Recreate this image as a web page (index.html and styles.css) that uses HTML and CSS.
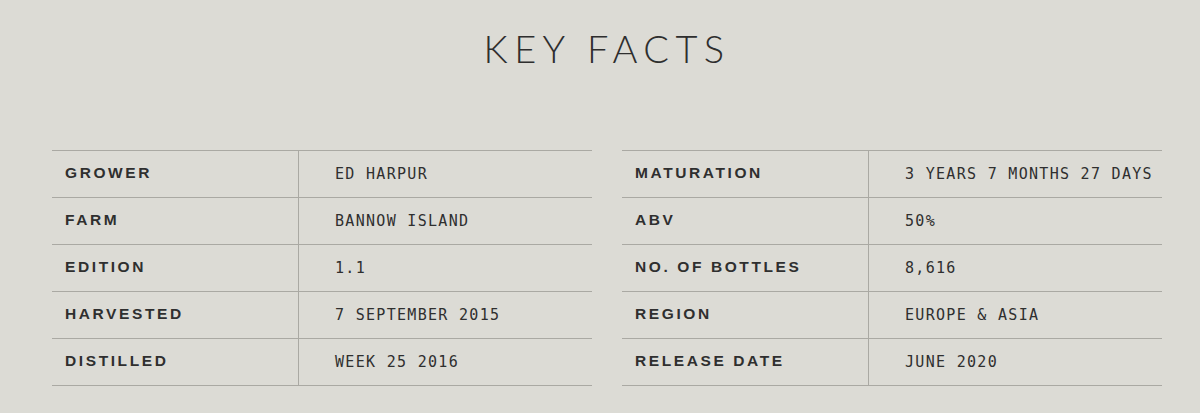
FILE: index.html
```html
<!DOCTYPE html>
<html lang="en">
<head>
<meta charset="utf-8">
<title>Key Facts</title>
<link rel="stylesheet" href="styles.css">
</head>
<body>
<section class="facts">
  <h2 class="facts-title">KEY FACTS</h2>
  <div class="tables">
    <dl class="table">
      <div class="row"><dt>Grower</dt><dd>ED HARPUR</dd></div>
      <div class="row"><dt>Farm</dt><dd>BANNOW ISLAND</dd></div>
      <div class="row"><dt>Edition</dt><dd>1.1</dd></div>
      <div class="row"><dt>Harvested</dt><dd>7 SEPTEMBER 2015</dd></div>
      <div class="row"><dt>Distilled</dt><dd>WEEK 25 2016</dd></div>
    </dl>
    <dl class="table">
      <div class="row"><dt>Maturation</dt><dd>3 YEARS 7 MONTHS 27 DAYS</dd></div>
      <div class="row"><dt>ABV</dt><dd>50%</dd></div>
      <div class="row"><dt>No. of Bottles</dt><dd>8,616</dd></div>
      <div class="row"><dt>Region</dt><dd>EUROPE &amp; ASIA</dd></div>
      <div class="row"><dt>Release Date</dt><dd>JUNE 2020</dd></div>
    </dl>
  </div>
</section>
</body>
</html>
```

FILE: styles.css
```css
html, body {
  margin: 0;
  padding: 0;
  background: #dcdbd5;
  color: #2d2d2d;
}

.facts {
  width: 1200px;
  height: 413px;
  box-sizing: border-box;
  padding: 0 38px 0 52px;
  overflow: hidden;
}

.facts-title {
  margin: 0;
  height: 150px;
  box-sizing: border-box;
  padding-top: 27px;
  padding-left: 0;
  text-align: center;
  font-family: "Lato", "Liberation Sans", sans-serif;
  font-weight: 300;
  font-size: 38px;
  line-height: 42px;
  letter-spacing: 6.4px;
  color: #2e2e2e;
}

.tables {
  display: grid;
  grid-template-columns: 540px 540px;
  column-gap: 30px;
}

.table {
  margin: 0;
  border-bottom: 1px solid #aaa9a3;
}

.row {
  display: grid;
  grid-template-columns: 247px 1fr;
  height: 47px;
  box-sizing: border-box;
  border-top: 1px solid #aaa9a3;
}

.row dt {
  display: flex;
  align-items: center;
  padding-left: 13px;
  padding-bottom: 2px;
  border-right: 1px solid #aaa9a3;
  font-family: "Liberation Sans", Arial, sans-serif;
  font-weight: bold;
  font-size: 15.5px;
  letter-spacing: 2.6px;
  text-transform: uppercase;
  color: #2f2f2f;
}

.row dd {
  display: flex;
  align-items: center;
  margin: 0;
  padding-left: 36px;
  padding-bottom: 1px;
  font-family: "DejaVu Sans Mono", monospace;
  font-size: 15px;
  letter-spacing: 1.3px;
  color: #2f2f2f;
}
```
